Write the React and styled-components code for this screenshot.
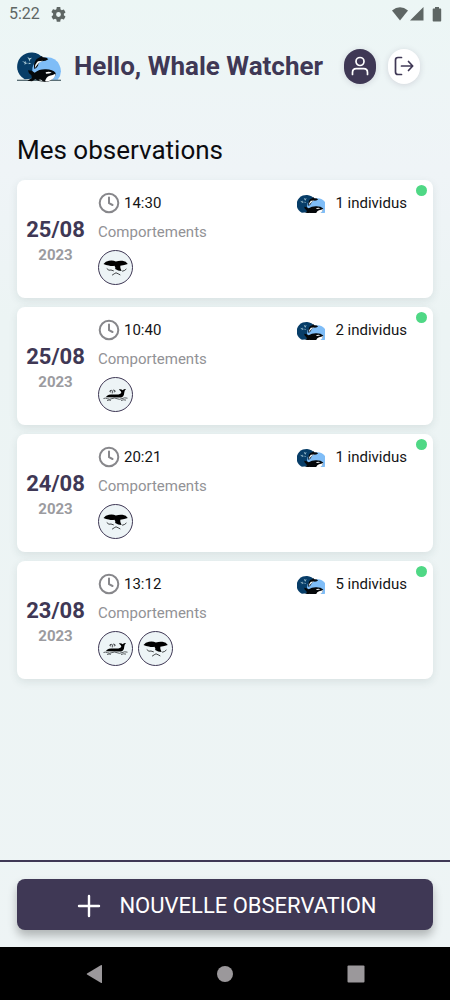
import React from "react";
import styled, { createGlobalStyle } from "styled-components";

const ink = "#3f3855";

const GlobalStyle = createGlobalStyle`
  *, *::before, *::after { box-sizing: border-box; }
  body {
    margin: 0;
    font-family: Roboto, "Liberation Sans", sans-serif;
    background: #edf4f4;
  }
  h1, h2, p, ul { margin: 0; padding: 0; }
  button { font: inherit; border: 0; padding: 0; cursor: pointer; }
`;

const Screen = styled.div`
  display: flex;
  flex-direction: column;
  min-height: 100vh;
  background: linear-gradient(180deg, #ecf6f5 0, #eff4f7 170px, #ecf4f4 320px, #eef4f5 100%);
`;

const StatusBar = styled.div`
  display: flex;
  align-items: center;
  height: 28px;
  padding: 0 8px 0 9px;
  gap: 11px;
  font-size: 16px;
  line-height: 20px;
  color: #5e6664;
`;

const StatusIcons = styled.div`
  display: flex;
  align-items: center;
  gap: 2px;
  margin-left: auto;
`;

const Header = styled.header`
  display: flex;
  align-items: center;
  height: 76px;
  padding: 0 30px 0 17px;
`;

const Greeting = styled.h1`
  flex: 1;
  margin-left: 13px;
  font-size: 26px;
  line-height: 32px;
  font-weight: 700;
  white-space: nowrap;
  color: ${ink};
`;

const HeaderActions = styled.div`
  display: flex;
  gap: 12px;
`;

const RoundButton = styled.button`
  display: flex;
  align-items: center;
  justify-content: center;
  width: 32px;
  height: 35px;
  border-radius: 16px;
  color: ${(p) => (p.$dark ? "#ffffff" : ink)};
  background: ${(p) => (p.$dark ? ink : "#ffffff")};
  box-shadow: 0 1px 6px rgba(60, 50, 80, 0.16);
`;

const Main = styled.main`
  flex: 1;
  padding: 30px 17px 24px;
`;

const SectionTitle = styled.h2`
  margin-bottom: 14px;
  font-size: 26px;
  line-height: 32px;
  font-weight: 400;
  color: #0c0c10;
`;

const List = styled.ul`
  display: flex;
  flex-direction: column;
  gap: 9px;
  list-style: none;
`;

const Card = styled.li`
  position: relative;
  display: flex;
  min-height: 118px;
  padding: 12px 26px 12px 0;
  border-radius: 8px;
  background: #ffffff;
  box-shadow: 0 3px 8px rgba(40, 70, 70, 0.1);
`;

const StatusDot = styled.span`
  position: absolute;
  top: 5px;
  right: 6px;
  width: 11px;
  height: 11px;
  border-radius: 50%;
  background: #4fd885;
`;

const DateColumn = styled.div`
  display: flex;
  flex-direction: column;
  align-items: center;
  justify-content: center;
  width: 77px;
  padding-top: 4px;
  font-weight: 700;
`;

const Day = styled.span`
  font-size: 22px;
  line-height: 28px;
  color: ${ink};
`;

const Year = styled.span`
  font-size: 15px;
  line-height: 22px;
  color: #9b9b9f;
`;

const Details = styled.div`
  flex: 1;
  margin-left: 4px;
`;

const TopRow = styled.div`
  display: flex;
  align-items: center;
  justify-content: space-between;
  height: 22px;
  font-size: 15px;
  line-height: 22px;
  color: #141416;
`;

const IconText = styled.span`
  display: flex;
  align-items: center;
  gap: ${(p) => p.$gap}px;
`;

const Label = styled.p`
  margin: 8px 0;
  font-size: 15px;
  line-height: 20px;
  color: #929296;
`;

const Behaviours = styled.div`
  display: flex;
  gap: 5px;
`;

const Behaviour = styled.span`
  display: flex;
  width: 35px;
  height: 35px;
  border: 1px solid ${ink};
  border-radius: 50%;
  background: #edf4f6;
`;

const Footer = styled.footer`
  padding: 17px;
  border-top: 2px solid ${ink};
`;

const NewButton = styled.button`
  display: flex;
  align-items: center;
  justify-content: center;
  gap: 18px;
  width: 100%;
  height: 51px;
  padding: 2px 0 0 4px;
  border-radius: 8px;
  font-size: 22px;
  line-height: 28px;
  color: #ffffff;
  background: ${ink};
  box-shadow: 0 6px 10px rgba(0, 0, 0, 0.26);
`;

const SystemNav = styled.nav`
  display: flex;
  align-items: center;
  justify-content: space-between;
  height: 53px;
  padding: 0 82px;
  background: #000000;
`;

const NavButton = styled.button`
  display: flex;
  width: 24px;
  height: 24px;
  background: transparent;
`;

function WhaleLogo({ width, height, cropped }) {
  return (
    <svg
      width={width}
      height={height}
      viewBox={cropped ? "23 30 122 86" : "21 30 132 93"}
      preserveAspectRatio="none"
      aria-hidden="true"
    >
      <path d="M44 115A43 43 0 1 1 100 53L84 112Z" fill="#073d68" />
      <path d="M74 116Q62 91 70 72Q84 50 110 49A41 41 0 0 1 143 116Z" fill="#7fbdf7" />
      {!cropped && <path d="M21 116H153V119H21Z" fill="#29404a" />}
      <path d="M36 60l8 3 2-4 1 6 8 1-8 2-3 4 0-6zM52 47l6 5 8-2-6 6-1 6-3-7zM56 65l8 2-8 3z" fill="#b9d6df" />
      <path d="M73 84Q69 66 80 54L89 49L96 45L98 49Q110 48 115 55Q108 61 95 61Q85 65 84 74Q80 81 73 84Z" fill="#05080b" />
      <path d="M83 61Q91 59 99 59Q91 62 86 67Q80 73 75 81Q74 71 83 61Z" fill="#f2f7f8" />
      <path d="M78 60l7-3-3 5z" fill="#05080b" />
      <path d="M52 119L66 111L64 103Q54 96 54 88Q67 88 74 95Q88 84 108 85Q128 85 137 96Q138 105 128 113Q121 122 108 123L86 120L76 115L66 121Z" fill="#05080b" />
      <path d="M105 121Q108 108 119 104Q129 102 136 98Q137 107 127 115Q118 123 105 121Z" fill="#ffffff" />
      <path d="M107 94Q117 90 125 95Q117 98 108 98Z" fill="#ffffff" />
      <path d="M85 117Q94 113 98 121Z" fill="#dce8e9" />
    </svg>
  );
}

function Clock() {
  return (
    <svg width="22" height="22" viewBox="0 0 22 22" fill="none" stroke="#87878b" strokeWidth="2" strokeLinecap="round" aria-hidden="true">
      <circle cx="11" cy="11" r="9.3" />
      <path d="M11 5.5V11.2L14.5 13" strokeLinejoin="round" />
    </svg>
  );
}

function Tail() {
  return (
    <svg width="33" height="33" viewBox="0 0 33 33" aria-hidden="true">
      <path d="M4.5 13Q6.5 10.3 10 9.8Q14.3 9.2 16.8 10.6Q20 9.4 23.5 9.8Q27.3 10.2 28.8 13Q25.5 14.2 21.3 14.8Q20.8 16.5 22.6 20Q19 19.8 16.2 18Q16.8 16.2 15.4 14.8Q12.5 15.4 9.8 14.4Q7 14.4 4.5 13Z" fill="#000" />
      <path d="M8 17.8Q10 20.2 12 19L14.4 19.8M23.5 20.2Q25.6 20 27.2 18.2M13.4 24L15.2 22.8L17 21.8L19.2 22.8L21 23.8" fill="none" stroke="#16191c" strokeWidth="0.8" strokeLinecap="round" />
    </svg>
  );
}

function Spout() {
  return (
    <svg width="33" height="33" viewBox="0 0 33 33" aria-hidden="true">
      <path d="M7 19.2Q7.5 16.8 12 16.4L17 16.6Q21.4 16.8 22.3 14.8Q22.6 13 19.8 11.4Q22.4 11 23.7 12.2Q25 10.7 27 10.9Q25.3 12.5 25.2 15Q25 18.6 22 19.5Z" fill="#000" />
      <path d="M13.3 15.4V13.2Q12.8 11.5 11 12.7Q10.2 14 12 14M13.3 13.2Q14.5 11.3 16 12.6Q17 13.8 14.8 14" fill="none" stroke="#222529" strokeWidth="0.8" />
      <path d="M4.5 20.5Q6.5 19.6 8.5 20.7T13 20.6T18 20.7T23 20.6T28.5 20.2M8 22.5Q10 21.6 12 22.3M22 22.5Q24.5 21.3 27 22.1" fill="none" stroke="#33373b" strokeWidth="0.8" />
    </svg>
  );
}

const icons = { tail: Tail, spout: Spout };
const names = { tail: "Queue", spout: "Souffle" };

const observations = [
  { day: "25/08", year: "2023", time: "14:30", count: 1, seen: ["tail"] },
  { day: "25/08", year: "2023", time: "10:40", count: 2, seen: ["spout"] },
  { day: "24/08", year: "2023", time: "20:21", count: 1, seen: ["tail"] },
  { day: "23/08", year: "2023", time: "13:12", count: 5, seen: ["spout", "tail"] },
];

function Observation({ day, year, time, count, seen }) {
  return (
    <Card>
      <DateColumn>
        <Day>{day}</Day>
        <Year>{year}</Year>
      </DateColumn>
      <Details>
        <TopRow>
          <IconText $gap={4}>
            <Clock />
            {time}
          </IconText>
          <IconText $gap={10}>
            <WhaleLogo width={28} height={19} cropped />
            {count} individus
          </IconText>
        </TopRow>
        <Label>Comportements</Label>
        <Behaviours>
          {seen.map((kind) => {
            const Icon = icons[kind];
            return (
              <Behaviour key={kind} role="img" aria-label={names[kind]}>
                <Icon />
              </Behaviour>
            );
          })}
        </Behaviours>
      </Details>
      <StatusDot />
    </Card>
  );
}

export default function App() {
  return (
    <>
      <GlobalStyle />
      <Screen>
        <StatusBar>
          <span>5:22</span>
          <svg width="15" height="15" viewBox="2 2 20 20" fill="#5e6664" aria-hidden="true">
            <path d="M19.14 12.94c.04-.3.06-.61.06-.94s-.02-.64-.07-.94l2.03-1.58a.49.49 0 0 0 .12-.61l-1.92-3.32a.49.49 0 0 0-.59-.22l-2.39.96a7 7 0 0 0-1.62-.94l-.36-2.54A.48.48 0 0 0 13.92 2h-3.84a.48.48 0 0 0-.48.41l-.36 2.54c-.59.24-1.13.57-1.62.94l-2.39-.96a.49.49 0 0 0-.59.22L2.72 8.47a.49.49 0 0 0 .12.61l2.03 1.58c-.05.3-.07.62-.07.94s.02.64.07.94l-2.03 1.98a.49.49 0 0 0-.12.61l1.92 3.32c.12.22.37.29.59.22l2.39-.96c.5.38 1.03.7 1.62.94l.36 2.54c.05.24.24.41.48.41h3.84c.24 0 .44-.17.47-.41l.36-2.54a7 7 0 0 0 1.62-.94l2.39.96c.22.08.47 0 .59-.22l1.92-3.32a.49.49 0 0 0-.12-.61zM12 15.2a3.2 3.2 0 1 1 0-6.4 3.2 3.2 0 0 1 0 6.4z" />
          </svg>
          <StatusIcons>
            <svg width="16" height="14" viewBox="0 0 16 14" fill="#5e6664" aria-hidden="true">
              <path d="M0 3.4Q8-2.8 16 3.4L8 13.6Z" />
            </svg>
            <svg width="14" height="14" viewBox="0 0 14 14" fill="#5e6664" aria-hidden="true">
              <path d="M13.5 0V13.5H0Z" />
            </svg>
            <svg width="16" height="15" viewBox="0 0 16 15" fill="#5e6664" aria-hidden="true">
              <path d="M9 0h4v1.5h1.5q.7 0 .7.7v11.6q0 .7-.7.7H7.4q-.7 0-.7-.7V2.2q0-.7.7-.7H9z" />
            </svg>
          </StatusIcons>
        </StatusBar>
        <Header>
          <WhaleLogo width={44} height={31} />
          <Greeting>Hello, Whale Watcher</Greeting>
          <HeaderActions>
            <RoundButton $dark aria-label="Profil">
              <svg width="20" height="20" viewBox="0 0 20 20" fill="none" stroke="currentColor" strokeWidth="1.7" strokeLinecap="round" aria-hidden="true">
                <circle cx="10" cy="5.5" r="4" />
                <path d="M2.5 18.5V16.5Q2.5 12.7 6.3 12.7H13.7Q17.5 12.7 17.5 16.5V18.5" />
              </svg>
            </RoundButton>
            <RoundButton aria-label="Se déconnecter">
              <svg width="20" height="20" viewBox="0 0 20 20" fill="none" stroke="currentColor" strokeWidth="1.7" strokeLinecap="round" strokeLinejoin="round" aria-hidden="true">
                <path d="M7.5 1.5H4Q1.5 1.5 1.5 4V16Q1.5 18.5 4 18.5H7.5M7.5 10H18.5M14.5 5.5L18.7 10L14.5 14.5" />
              </svg>
            </RoundButton>
          </HeaderActions>
        </Header>
        <Main>
          <SectionTitle>Mes observations</SectionTitle>
          <List>
            {observations.map((o) => (
              <Observation key={o.day + o.time} {...o} />
            ))}
          </List>
        </Main>
        <Footer>
          <NewButton>
            <svg width="24" height="24" viewBox="0 0 24 24" stroke="currentColor" strokeWidth="2.4" strokeLinecap="round" aria-hidden="true">
              <path d="M12 2V22M2 12H22" />
            </svg>
            NOUVELLE OBSERVATION
          </NewButton>
        </Footer>
        <SystemNav>
          <NavButton aria-label="Retour">
            <svg width="24" height="24" viewBox="0 0 24 24" fill="#9b989b" aria-hidden="true">
              <path d="M20 3.6V20.4Q20 21.3 19.2 20.9L5 12.5Q4.4 12 5 11.5L19.2 3.1Q20 2.8 20 3.6Z" />
            </svg>
          </NavButton>
          <NavButton aria-label="Accueil">
            <svg width="24" height="24" viewBox="0 0 24 24" fill="#9b989b" aria-hidden="true">
              <circle cx="12" cy="12" r="8" />
            </svg>
          </NavButton>
          <NavButton aria-label="Applications récentes">
            <svg width="24" height="24" viewBox="0 0 24 24" fill="#9b989b" aria-hidden="true">
              <rect x="3.5" y="3.5" width="17" height="17" rx="1" />
            </svg>
          </NavButton>
        </SystemNav>
      </Screen>
    </>
  );
}
